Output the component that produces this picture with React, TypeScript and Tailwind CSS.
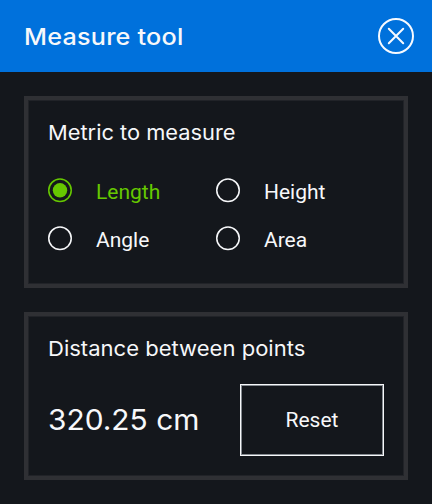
const metrics = ['Length', 'Height', 'Angle', 'Area'];

function CloseIcon() {
  return (
    <svg width="36" height="36" viewBox="0 0 36 36" fill="none" stroke="#f7faff">
      <circle cx="18" cy="18" r="17" strokeWidth="2" />
      <path d="M10.8 10.8 25.2 25.2M25.2 10.8 10.8 25.2" strokeWidth="2" strokeLinecap="round" />
    </svg>
  );
}

function Radio({ label, checked }: { label: string; checked: boolean }) {
  return (
    <div
      role="radio"
      aria-checked={checked}
      className={`flex h-12 w-[168px] items-center gap-6 ${checked ? 'text-[#66c800]' : 'text-[#f7f8fa]'}`}
    >
      <svg className="-mt-1 shrink-0 overflow-visible" width="24" height="24" viewBox="0 0 24 24">
        <circle cx="12" cy="12.3" r="11.25" fill="none" stroke="currentColor" strokeWidth="1.5" />
        {checked && <circle cx="12" cy="12.3" r="7.2" fill="currentColor" />}
      </svg>
      <span className="font-[Roboto,sans-serif] text-[21px] leading-6">{label}</span>
    </div>
  );
}

const panel = 'border-4 border-[#2f3034] px-5 shadow-[inset_0_0_0_1px_#212328]';
const heading = 'origin-left whitespace-nowrap pt-[21px] text-[20.5px] leading-6';

export default function App() {
  return (
    <main className="h-[504px] w-[432px] bg-[#14171c] font-[Inter,sans-serif] text-[#f7f8fa]">
      <header className="flex h-[72px] items-center justify-between bg-[#0071dc] pr-[18px] pl-6">
        <h1 className="origin-left scale-x-[1.095] whitespace-nowrap pt-0.5 text-[23px] leading-8 font-medium tracking-[0.2px]">
          Measure tool
        </h1>
        <button aria-label="Close">
          <CloseIcon />
        </button>
      </header>
      <div className="flex flex-col gap-6 p-6">
        <section className={`h-48 ${panel}`}>
          <h2 className={`scale-x-[1.065] ${heading}`}>Metric to measure</h2>
          <div role="radiogroup" className="mt-[23px] flex flex-wrap">
            {metrics.map((m) => (
              <Radio key={m} label={m} checked={m === 'Length'} />
            ))}
          </div>
        </section>
        <section className={`h-[168px] ${panel}`}>
          <h2 className={`scale-x-[1.075] ${heading}`}>Distance between points</h2>
          <div className="mt-[23px] flex items-center justify-between">
            <output className="origin-left scale-x-[1.03] whitespace-nowrap text-[29px] leading-9">320.25 cm</output>
            <button className="h-[72px] w-36 border border-[#f7f8fa] font-[Roboto,sans-serif] text-[21px] leading-6 shadow-[inset_0_0_0_1px_#858a90]">
              Reset
            </button>
          </div>
        </section>
      </div>
    </main>
  );
}
